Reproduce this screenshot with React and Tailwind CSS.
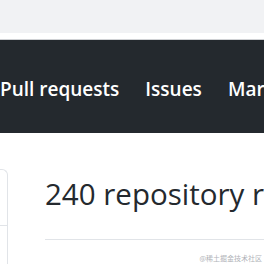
import React from 'react';

const navItems = ['Pull requests', 'Issues', 'Marketplace', 'Explore'];

const App = () => {
    return (
        <div className="w-[264px] h-[264px] overflow-hidden bg-white relative" style={{ fontFamily: '"Open Sans", "Noto Sans", sans-serif' }}>
            {/* browser chrome strip */}
            <div className="h-[33px] bg-[#f1f2f4]" />
            <div className="h-[7px] bg-white border-b border-[#cfd1d4]" />

            {/* dark header */}
            <div className="h-[93px] pt-[6px] bg-[#24292e] flex items-center gap-[26px] whitespace-nowrap">
                {navItems.map(item => (
                    <span key={item} className="text-white text-[19px] font-semibold leading-none">
                        {item}
                    </span>
                ))}
            </div>

            {/* main content */}
            <div className="flex pt-[36px]">
                <div className="w-[8px] h-[120px] shrink-0 border-t border-r border-[#e1e4e8] rounded-tr-[6px] flex flex-col">
                    <div className="h-[56px] border-b border-[#e1e4e8]" />
                </div>
                <div className="ml-[37px] flex-1 min-w-0">
                    <h1 className="text-[29.5px] leading-[40px] text-[#24292e] font-normal whitespace-nowrap mt-[5px]">
                        240 repository results
                    </h1>
                    <div className="mt-[25px] border-t border-[#e1e4e8]" />
                </div>
            </div>

            <span className="absolute right-[2px] bottom-[1px] text-[7px] text-[#b0b3b8] whitespace-nowrap" style={{ fontFamily: '"Noto Sans CJK SC", sans-serif' }}>
                @稀土掘金技术社区
            </span>
        </div>
    );
};

export default App;
